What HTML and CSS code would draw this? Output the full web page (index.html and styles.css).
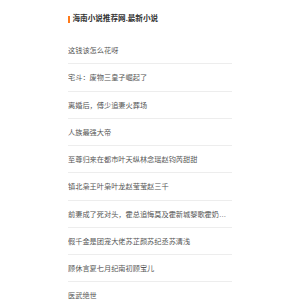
FILE: index.html
```html
<!doctype html>
<html lang="zh">
<head>
  <meta charset="utf-8">
  <title>海南小说推荐网.最新小说</title>
  <meta name="viewport" content="width=device-width, initial-scale=1">
  <link rel="stylesheet" href="styles.css">
</head>
<body>
  <main class="wrap">
    <h2 class="box-title">海南小说推荐网.最新小说</h2>
    <ul class="list">
      <li><a href="#">这钱该怎么花呀</a></li>
      <li><a href="#">宅斗：废物三皇子崛起了</a></li>
      <li><a href="#">离婚后，傅少追妻火葬场</a></li>
      <li><a href="#">人族最强大帝</a></li>
      <li><a href="#">至尊归来在都市叶天纵林念瑶赵钧芮甜甜</a></li>
      <li><a href="#">镇北枭王叶枭叶龙赵莹莹赵三千</a></li>
      <li><a href="#">前妻成了死对头，霍总追悔莫及霍新城黎歌霍奶奶乔家人</a></li>
      <li><a href="#">假千金是团宠大佬苏芷颜苏纪丞苏清浅</a></li>
      <li><a href="#">顾休言夏七月纪南初顾宝儿</a></li>
      <li><a href="#">医武绝世</a></li>
    </ul>
  </main>
</body>
</html>
```

FILE: styles.css
```css
*{ box-sizing:border-box }
body{ margin:0; background:#fff; font-family:"Liberation Sans","Noto Sans CJK SC",sans-serif; color:#555; }

.wrap{ width:164px; margin:0 auto; padding-top:12px; }

.box-title{ margin:0 0 11px; height:14px; line-height:14px; font-size:7.6px; font-weight:700; color:#333; display:flex; align-items:center; gap:3px; }
.box-title::before{ content:""; width:1.5px; height:7px; background:#ff7a1a; }

.list{ list-style:none; margin:0; padding:0; }
.list li{ height:27.25px; line-height:28px; border-bottom:1px solid #ededed; font-size:7.2px; white-space:nowrap; overflow:hidden; text-overflow:ellipsis; }
.list li:last-child{ border-bottom:0 }
.list a{ color:#555; text-decoration:none; }
```
